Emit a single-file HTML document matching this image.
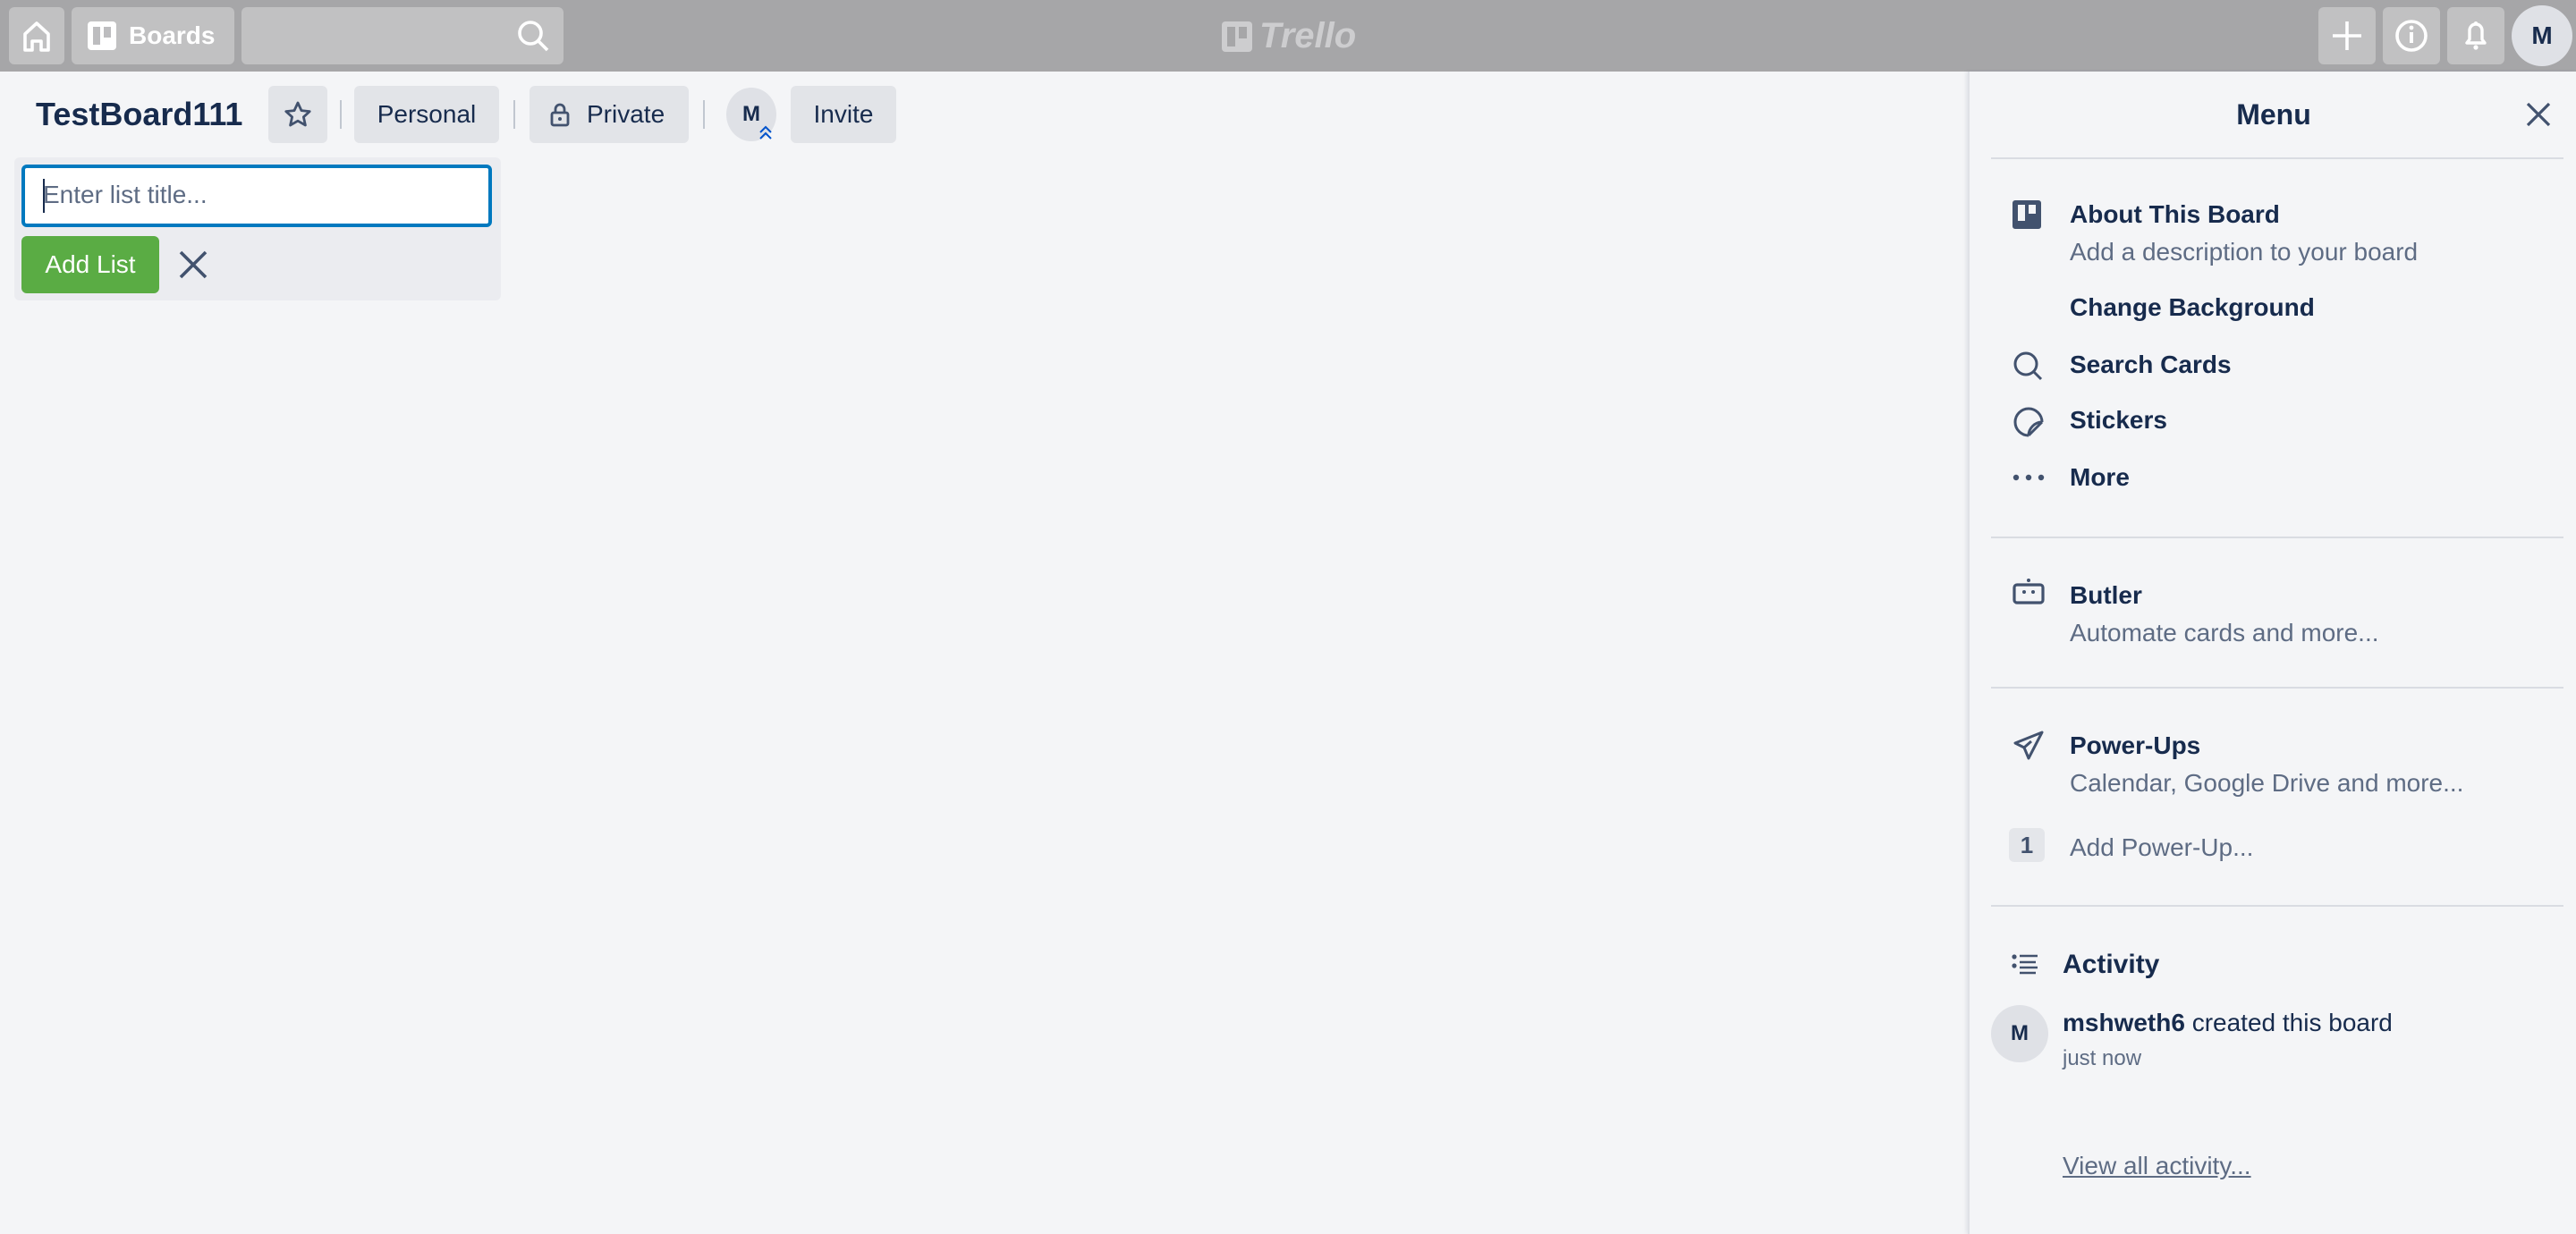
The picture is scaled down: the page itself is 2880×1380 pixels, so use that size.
<!DOCTYPE html>
<html><head><meta charset="utf-8">
<style>
html,body{margin:0;padding:0;width:2880px;height:1380px;overflow:hidden;background:#f4f5f7}
#r{zoom:2;width:1440px;height:690px;position:relative;font-family:"Liberation Sans",sans-serif;color:#172b4d;font-size:14px;background:#f4f5f7}
.a{position:absolute}
.top{left:0;top:0;width:1440px;height:40px;background:#a6a6a8}
.tb{position:absolute;top:4px;height:32px;background:rgba(255,255,255,.3);border-radius:3px}
.hb{position:absolute;top:48px;height:32px;background:#e2e4e8;border-radius:3px;font-size:14px;line-height:32px;text-align:center;color:#172b4d}
.sep{position:absolute;top:56px;width:1px;height:16px;background:#c1c7d0}
.menu{left:1100px;top:40px;width:340px;height:650px;background:#f4f5f7;border-left:1px solid #dfe1e6;box-shadow:-1px 0 2px rgba(9,30,66,.08)}
.div{position:absolute;left:12px;width:320px;height:1px;background:#d9dce2}
.it{position:absolute;left:56px;font-weight:bold;font-size:14px;color:#172b4d}
.ds{position:absolute;left:56px;font-size:14px;color:#5e6c84}
.ic{position:absolute;left:24px}
</style></head><body><div id="r">
<div class="a top">
 <div class="tb" style="left:5px;width:31px"><svg width="31" height="32" viewBox="0 0 31 32"><path d="M9 24V15l6.5-6 6.5 6v9h-4v-5h-5v5z" fill="none" stroke="#fff" stroke-width="1.8" stroke-linejoin="round"/></svg></div>
 <div class="tb" style="left:40px;width:91px"><svg class="a" style="left:9px;top:8px" width="16" height="16"><rect x="0" y="0" width="16" height="16" rx="2" fill="#fff"/><rect x="3" y="3" width="4" height="10" fill="#bdbdbf"/><rect x="9" y="3" width="4" height="6" fill="#bdbdbf"/></svg><span class="a" style="left:32px;top:8px;color:#fff;font-weight:bold;font-size:14px">Boards</span></div>
 <div class="tb" style="left:135px;width:180px"><svg class="a" style="left:154px;top:7px" width="18" height="18"><circle cx="7.5" cy="7.5" r="6" fill="none" stroke="#fff" stroke-width="1.8"/><path d="M12 12l5 5" stroke="#fff" stroke-width="1.8"/></svg></div>
 <div class="a" style="left:683px;top:11px;width:80px;height:22px"><svg width="17" height="17" style="position:absolute;left:0;top:1px"><rect width="17" height="17" rx="2" fill="#cdcdcf"/><rect x="3" y="3" width="4.5" height="11" fill="#a6a6a8"/><rect x="9.5" y="3" width="4.5" height="6.5" fill="#a6a6a8"/></svg><span style="position:absolute;left:21px;top:-2px;font-size:20px;font-weight:bold;font-style:italic;color:#cdcdcf">Trello</span></div>
 <div class="tb" style="left:1296px;width:32px"><svg width="32" height="32"><path d="M16 8v16M8 16h16" stroke="#fff" stroke-width="1.8"/></svg></div>
 <div class="tb" style="left:1332px;width:32px"><svg width="32" height="32"><circle cx="16" cy="16" r="8" fill="none" stroke="#fff" stroke-width="1.8"/><path d="M16 14v6" stroke="#fff" stroke-width="2"/><circle cx="16" cy="11.5" r="1.2" fill="#fff"/></svg></div>
 <div class="tb" style="left:1368px;width:32px"><svg width="32" height="32"><path d="M11 20h10l-1.5-2v-5a3.5 3.5 0 0 0-7 0v5z" fill="none" stroke="#fff" stroke-width="1.7" stroke-linejoin="round"/><circle cx="16" cy="22.5" r="1.3" fill="#fff"/><circle cx="16" cy="9" r="1" fill="#fff"/></svg></div>
 <div class="a" style="left:1404px;top:3px;width:34px;height:34px;border-radius:50%;background:#dfe1e6;text-align:center;line-height:34px;font-weight:bold;font-size:14px;color:#172b4d">M</div>
</div>
<div class="a" style="left:20px;top:52px;font-size:18px;font-weight:bold;line-height:24px">TestBoard111</div>
<div class="hb" style="left:150px;width:33px"><svg width="33" height="32"><path d="M16.5 9.5l2 4.3 4.6.5-3.4 3.1 1 4.6-4.2-2.4-4.2 2.4 1-4.6-3.4-3.1 4.6-.5z" fill="none" stroke="#42526e" stroke-width="1.4" stroke-linejoin="round"/></svg></div>
<div class="sep" style="left:190px"></div>
<div class="hb" style="left:198px;width:81px">Personal</div>
<div class="sep" style="left:287px"></div>
<div class="hb" style="left:296px;width:89px"><svg class="a" style="left:11px;top:9px" width="12" height="14"><rect x="1.5" y="6" width="9" height="7" rx="1" fill="none" stroke="#42526e" stroke-width="1.4"/><path d="M3.5 6V4a2.5 2.5 0 0 1 5 0v2" fill="none" stroke="#42526e" stroke-width="1.4"/><circle cx="6" cy="9.5" r="1" fill="#42526e"/></svg><span style="position:absolute;left:32px">Private</span></div>
<div class="sep" style="left:393px"></div>
<div class="a" style="left:406px;top:49px;width:28px;height:30px;border-radius:50%;background:#dfe1e6;text-align:center;line-height:30px;font-weight:bold;font-size:12px">M</div>
<svg class="a" style="left:424px;top:70px" width="8" height="8"><path d="M1 4l3-3 3 3M1 7.5l3-3 3 3" fill="none" stroke="#0052cc" stroke-width="1"/></svg>
<div class="hb" style="left:442px;width:59px">Invite</div>
<div class="a" style="left:8px;top:88px;width:272px;height:80px;background:#ebecf0;border-radius:3px"></div>
<div class="a" style="left:12px;top:92px;width:259px;height:31px;background:#fff;border:2px solid #0079bf;border-radius:3px"><span style="position:absolute;left:10px;top:7px;color:#5e6c84;font-size:14px">Enter list title...</span><span style="position:absolute;left:10px;top:6px;width:1px;height:19px;background:#172b4d"></span></div>
<div class="a" style="left:12px;top:132px;width:77px;height:32px;background:#5aac44;border-radius:3px;color:#fff;text-align:center;line-height:32px;font-size:14px">Add List</div>
<svg class="a" style="left:100px;top:140px" width="16" height="16"><path d="M1 1l14 14M15 1L1 15" stroke="#42526e" stroke-width="1.8"/></svg>

<div class="a menu">
 <div class="a" style="left:0;width:340px;top:15px;text-align:center;font-weight:bold;font-size:16px">Menu</div>
 <svg class="a" style="left:311px;top:17px" width="14" height="14"><path d="M1 1l12 12M13 1L1 13" stroke="#42526e" stroke-width="1.6"/></svg>
 <div class="div" style="top:48px"></div>
 <svg class="ic" style="top:72px" width="16" height="16"><rect width="16" height="16" rx="1.5" fill="#42526e"/><rect x="3" y="2.5" width="4" height="9" fill="#f4f5f7"/><rect x="9" y="2.5" width="4" height="5" fill="#f4f5f7"/></svg>
 <div class="it" style="top:72px">About This Board</div>
 <div class="ds" style="top:93px">Add a description to your board</div>
 <div class="it" style="top:124px">Change Background</div>
 <svg class="ic" style="top:156px" width="18" height="18"><circle cx="7.5" cy="7.5" r="6" fill="none" stroke="#42526e" stroke-width="1.5"/><path d="M12 12l4 4" stroke="#42526e" stroke-width="1.5"/></svg>
 <div class="it" style="top:156px">Search Cards</div>
 <svg class="ic" style="top:187px" width="18" height="18"><path d="M9 16.5A7.5 7.5 0 1 1 16.5 9M16.5 9L9 16.5M16.5 9c-4 0-7.5 3.5-7.5 7.5" fill="none" stroke="#42526e" stroke-width="1.5"/></svg>
 <div class="it" style="top:187px">Stickers</div>
 <svg class="ic" style="top:224px" width="18" height="6"><circle cx="2" cy="3" r="1.6" fill="#42526e"/><circle cx="9" cy="3" r="1.6" fill="#42526e"/><circle cx="16" cy="3" r="1.6" fill="#42526e"/></svg>
 <div class="it" style="top:219px">More</div>
 <div class="div" style="top:260px"></div>
 <svg class="ic" style="top:283px" width="18" height="16"><rect x="1" y="4" width="16" height="10" rx="1.5" fill="none" stroke="#42526e" stroke-width="1.6"/><circle cx="9" cy="1.5" r="1" fill="#42526e"/><circle cx="6.5" cy="8" r="1" fill="#42526e"/><circle cx="11.5" cy="8" r="1" fill="#42526e"/></svg>
 <div class="it" style="top:285px">Butler</div>
 <div class="ds" style="top:306px">Automate cards and more...</div>
 <div class="div" style="top:344px"></div>
 <svg class="ic" style="top:368px" width="18" height="18"><path d="M16.5 1.5L1.5 7.5l5 2.5 2.5 6 7.5-14.5zM6.5 10l4-3.5" fill="none" stroke="#42526e" stroke-width="1.5" stroke-linejoin="round"/></svg>
 <div class="it" style="top:369px">Power-Ups</div>
 <div class="ds" style="top:390px">Calendar, Google Drive and more...</div>
 <div class="a" style="left:22px;top:423px;width:20px;height:19px;background:#e4e6ea;border-radius:3px;text-align:center;line-height:19px;font-size:13px;font-weight:bold;color:#42526e">1</div>
 <div class="ds" style="top:426px">Add Power-Up...</div>
 <div class="div" style="top:466px"></div>
 <svg class="ic" style="top:492px;left:23px" width="16" height="14"><circle cx="2" cy="3" r="1.3" fill="#42526e"/><circle cx="2" cy="8" r="1.3" fill="#42526e"/><path d="M5 2.5h10M5 6h9M5 9h10M5 12h9" stroke="#42526e" stroke-width="1.3"/></svg>
 <div class="it" style="top:491px;left:52px;font-size:15px">Activity</div>
 <div class="a" style="left:12px;top:522px;width:32px;height:32px;border-radius:50%;background:#dfe1e6;text-align:center;line-height:32px;font-weight:bold;font-size:12px">M</div>
 <div class="a" style="left:52px;top:524px;font-size:14px"><b>mshweth6</b> created this board</div>
 <div class="a" style="left:52px;top:545px;font-size:12px;color:#5e6c84">just now</div>
 <div class="a" style="left:52px;top:604px;font-size:14px;color:#5e6c84;text-decoration:underline">View all activity...</div>
</div>
</div></body></html>
